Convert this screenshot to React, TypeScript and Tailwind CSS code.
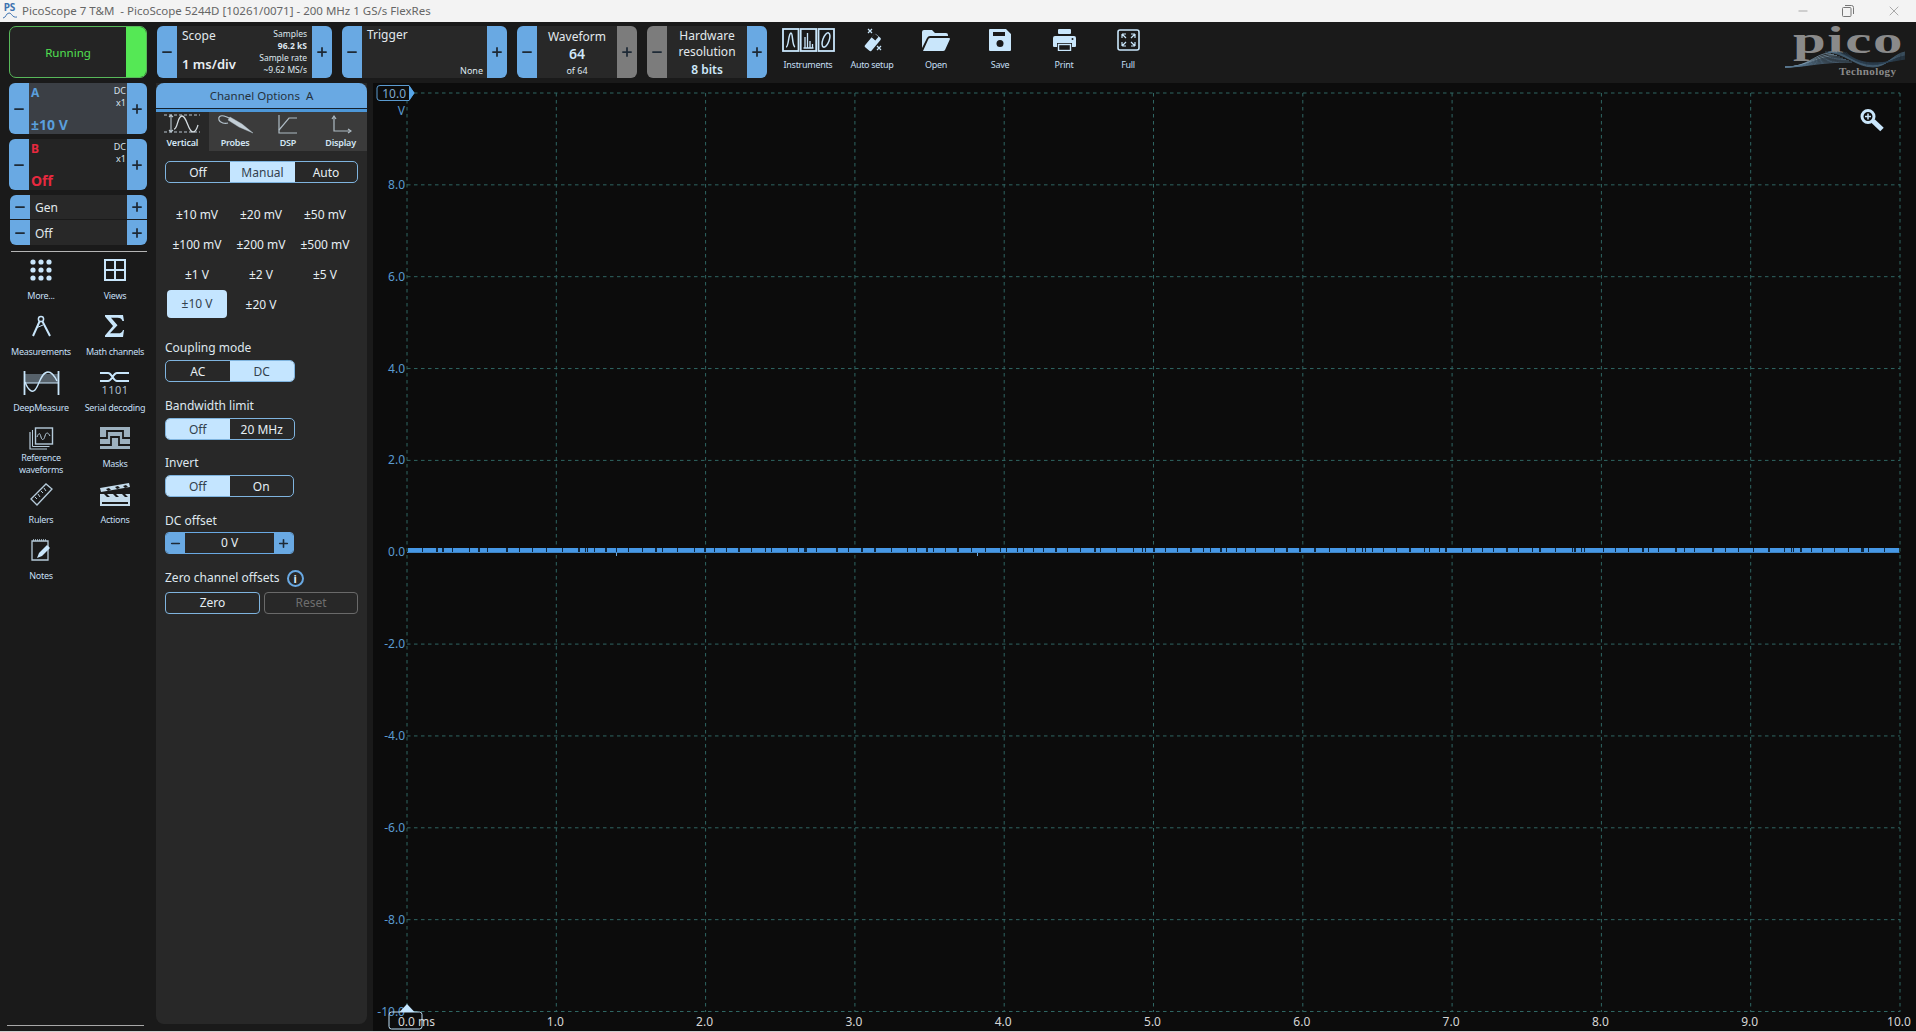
import type { ReactNode } from "react";
import { Minus, Plus, X } from "lucide-react";

const ICON = "#c9e6fb";

function Stepper({
  side,
  disabled,
  className,
}: {
  side: "l" | "r";
  disabled?: boolean;
  className: string;
}) {
  return (
    <div
      className={`flex shrink-0 items-center justify-center text-[#1e2a36] ${
        disabled ? "bg-[#7c7c7c]" : "bg-[#69a9e3]"
      } ${side === "l" ? "rounded-l-[6px]" : "rounded-r-[6px]"} ${className}`}
    >
      {side === "l" ? <Minus size={14} strokeWidth={3} /> : <Plus size={14} strokeWidth={3} />}
    </div>
  );
}

function Seg({
  items,
  active,
  widths,
  className,
}: {
  items: string[];
  active: number;
  widths: string[];
  className: string;
}) {
  return (
    <div className={`flex h-[22px] overflow-hidden rounded-[5px] border border-[#7fb4df] ${className}`}>
      {items.map((item, i) => (
        <div
          key={item}
          className={`flex items-center justify-center pt-[1px] text-[12px] ${widths[i]} ${
            i === active ? "bg-[#c4e5ff] text-[#33414d]" : "text-[#e6eef4]"
          }`}
        >
          {item}
        </div>
      ))}
    </div>
  );
}

function Channel({ name, range, colour, bg }: { name: string; range: string; colour: string; bg: string }) {
  return (
    <div className="flex h-[51px] w-[138px]">
      <Stepper side="l" className="w-[20px]" />
      <div className={`relative flex flex-1 flex-col justify-between px-[2px] ${bg}`}>
        <div className={`mt-[3px] text-[12px] font-bold leading-[14px] ${colour}`}>{name}</div>
        <div className={`mb-[1px] text-[14px] font-bold leading-[16px] ${colour}`}>{range}</div>
        <div className="absolute right-[1px] top-[2px] text-right text-[9px] leading-[12px] text-[#d8e4ee]">
          DC
          <br />
          x1
        </div>
      </div>
      <Stepper side="r" className="w-[20px]" />
    </div>
  );
}

function ToolButton({ icon, label, tight }: { icon: ReactNode; label: ReactNode; tight?: boolean }) {
  return (
    <div className="flex h-[56px] w-[74px] flex-col items-center">
      <div className={`flex items-start justify-center ${tight ? "h-[25px]" : "h-[31px]"}`}>{icon}</div>
      <div className="text-center text-[9px] leading-[12px] tracking-[-0.3px] text-[#c4dff3]">{label}</div>
    </div>
  );
}

function TopTool({ icon, label }: { icon: ReactNode; label: string }) {
  return (
    <div className="flex w-[64px] flex-col items-center">
      <div className="flex h-[28px] items-center justify-center">{icon}</div>
      <div className="mt-[5px] text-[9px] leading-[12px] tracking-[-0.3px] text-[#c4dff3]">{label}</div>
    </div>
  );
}

function Tab({ icon, label, active }: { icon: ReactNode; label: string; active?: boolean }) {
  return (
    <div className={`flex h-[39px] w-[53px] flex-col items-center ${active ? "bg-[#282828]" : "bg-[#3b3b3b]"}`}>
      <div className="flex h-[24px] items-center">{icon}</div>
      <div className="text-[9px] font-semibold leading-[13px] tracking-[-0.2px] text-[#d4e6f3]">{label}</div>
    </div>
  );
}

function Instruments() {
  return (
    <svg width="53" height="24" viewBox="0 0 53 24" fill="none" stroke={ICON} strokeWidth="1.8">
      <rect x="1" y="1" width="15.500" height="22" />
      <rect x="18.700" y="1" width="15.500" height="22" />
      <rect x="36.500" y="1" width="15.500" height="22" />
      <path d="M4 19c3 0 2-13 5-14 2 0 1 13 4 14" strokeWidth="1.500" />
      <path d="M21.500 20h10M23 20V9M25.500 20V5M28 20v-7M30.500 20v-4" strokeWidth="1.300" />
      <ellipse cx="44" cy="12" rx="3.200" ry="7.500" transform="rotate(20 44 12)" strokeWidth="1.500" />
    </svg>
  );
}

function AutoSetup() {
  return (
    <svg width="21" height="24" viewBox="0 0 21 24" fill="none">
      <rect x="6.500" y="6" width="8.500" height="17" rx="1.500" fill={ICON} transform="rotate(40 10.700 14.500)" />
      <rect x="10.500" y="6.500" width="5" height="5" fill="#1a1a1a" transform="rotate(40 13 9)" />
      <path d="M6 1l4 4M10 1L6 5M15 18l4 4M19 18l-4 4" stroke={ICON} strokeWidth="1.200" />
    </svg>
  );
}

function OpenIcon() {
  return (
    <svg width="28" height="22" viewBox="0 0 28 22" fill={ICON}>
      <path d="M0 3q0-2 2-2h8l3 3h11q2 0 2 2v1H8q-2 0-3 2L0 19z" />
      <path d="M8 9h19q1 0 1 1l-5 11q-.5 1-2 1H1l5-11q.5-2 2-2z" />
    </svg>
  );
}

function SaveIcon() {
  return (
    <svg width="22" height="22" viewBox="0 0 22 22">
      <path
        fill={ICON}
        fillRule="evenodd"
        d="M1 0h16l5 5v16a1 1 0 0 1-1 1H1a1 1 0 0 1-1-1V1a1 1 0 0 1 1-1zM4 3v4h12V3z"
      />
      <circle cx="11" cy="14.500" r="3.500" fill="#1a1a1a" />
    </svg>
  );
}

function PrintIcon() {
  return (
    <svg width="23" height="22" viewBox="0 0 23 22" fill={ICON}>
      <rect x="5" y="0" width="13" height="5" rx="1" />
      <path d="M2 7h19q2 0 2 2v8q0 1-1 1h-3v-4H4v4H1q-1 0-1-1V9q0-2 2-2z" />
      <rect x="5.500" y="15.500" width="12" height="6" fill="none" stroke={ICON} strokeWidth="1.400" />
      <circle cx="19.500" cy="10" r="1" fill="#1a1a1a" />
    </svg>
  );
}

function FullIcon() {
  return (
    <svg width="23" height="22" viewBox="0 0 23 22" fill="none" stroke={ICON}>
      <rect x="1" y="1" width="21" height="20" rx="2" strokeWidth="1.600" />
      <path d="M5 5h4M5 5v4M5 5l4 4M18 5h-4M18 5v4M18 5l-4 4M5 17h4M5 17v-4M5 17l4-4M18 17h-4M18 17v-4M18 17l-4-4" strokeWidth="1.200" />
    </svg>
  );
}

function VerticalIcon() {
  return (
    <svg width="38" height="22" viewBox="0 0 38 22" fill="none" stroke="#b9c6cf" strokeWidth="1.100">
      <path d="M1 2h36M1 19h36" strokeDasharray="3 2" />
      <path d="M8 2v17M6 4l2-2 2 2M6 17l2 2 2-2" />
      <path d="M11 16c4 0 3-13 8-13s6 16 11 16c3 0 4-4 5-7" strokeWidth="1.300" stroke="#d5dde2" />
    </svg>
  );
}

function ProbeIcon() {
  return (
    <svg width="38" height="20" viewBox="0 0 38 20" fill="none" stroke="#b6c4ce">
      <path d="M12 9C9 10 4 9 3 6s1-5 5-4 5 2 7 3" strokeWidth="1.200" />
      <path d="M14 3l12 7 11 9-14-6-11-7z" fill="#c3ced6" strokeWidth="0.400" />
    </svg>
  );
}

function DspIcon() {
  return (
    <svg width="22" height="20" viewBox="0 0 22 20" fill="none" stroke="#aebbc4" strokeWidth="1.200">
      <path d="M2 1v18h18" />
      <path d="M2 16L12 4h8" />
    </svg>
  );
}

function DisplayIcon() {
  return (
    <svg width="22" height="20" viewBox="0 0 22 20" fill="none" stroke="#aebbc4" strokeWidth="1.200">
      <path d="M4 3v14h16" />
      <path d="M2 5l2-3 2 3M18 15l3 2-3 2" />
    </svg>
  );
}

function Dots() {
  return (
    <svg width="22" height="22" viewBox="0 0 22 22" fill={ICON}>
      {[3, 11, 19].map((y) =>
        [3, 11, 19].map((x) => <circle key={`${x}-${y}`} cx={x} cy={y} r="2.600" />),
      )}
    </svg>
  );
}

function Views() {
  return (
    <svg width="22" height="22" viewBox="0 0 22 22" fill="none" stroke={ICON} strokeWidth="2">
      <rect x="1" y="1" width="20" height="20" />
      <path d="M11 1v20M1 11h20" />
    </svg>
  );
}

function MeasureIcon() {
  return (
    <svg width="19" height="22" viewBox="0 0 19 22" fill="none" stroke={ICON} strokeWidth="2">
      <circle cx="9" cy="4" r="2.600" strokeWidth="1.500" />
      <path d="M7.500 6.500L1 21M10.500 6.500L18 21" />
      <path d="M4 13l7-3" strokeWidth="1" />
    </svg>
  );
}

function Sigma() {
  return (
    <svg width="20" height="22" viewBox="0 0 20 22" fill={ICON}>
      <path d="M0 0h18l1 6h-1.500c-1-2.500-2-3.200-5-3.200H6l6.500 7.500-7.500 8h8c3 0 4.200-.8 5-3.300H19L18 22H0v-1.500L8 11 0 1.500z" />
    </svg>
  );
}

function DeepIcon() {
  return (
    <svg width="37" height="24" viewBox="0 0 37 24" fill="none" stroke={ICON} strokeWidth="1.400">
      <path d="M2 3h33v9H2z" fill="#6b7a85" stroke="none" opacity="0.75" />
      <path d="M1.500 0v24M35.500 0v24" strokeWidth="1.800" />
      <path d="M2 11c3 8 7 11 10 8 4-4 6-18 13-18 4 0 7 5 9 9" />
      <path d="M2 12h33" strokeWidth="1" />
    </svg>
  );
}

function SerialIcon() {
  return (
    <svg width="30" height="14" viewBox="0 0 30 14" fill="none" stroke={ICON} strokeWidth="2">
      <path d="M0 2h8c4 0 5 8 9 8h12M0 10h8c4 0 5-8 9-8h12" />
    </svg>
  );
}

function RefIcon() {
  return (
    <svg width="25" height="23" viewBox="0 0 25 23" fill="none" stroke="#b6cbda">
      <path d="M1 5v17h17" strokeWidth="1.200" />
      <path d="M3.500 3v16.500h17" strokeWidth="1" />
      <rect x="6.500" y="1" width="17" height="16" strokeWidth="1.400" />
      <path d="M8 10c2-5 3-4 4 0s3 3 4-1 3-4 5 0" strokeWidth="1" />
    </svg>
  );
}

function MaskIcon() {
  return (
    <svg width="30" height="22" viewBox="0 0 30 22" fill="none">
      <rect width="30" height="22" fill="#9db1bf" />
      <path d="M0 11h7V4h16v7h7M0 18h11v-8h8v8h11" stroke="#1a1a1a" strokeWidth="1.800" />
    </svg>
  );
}

function RulerIcon() {
  return (
    <svg width="23" height="23" viewBox="0 0 23 23" fill="none" stroke="#b6cbda" strokeWidth="1.300">
      <path d="M1 16L16 1l6 5L7 22z" />
      <path d="M5 14l2 2M8 11l2 3M11 8l2 2M14 5l2 3" strokeWidth="1" />
    </svg>
  );
}

function ClapIcon() {
  return (
    <svg width="30" height="23" viewBox="0 0 30 23" fill="#c4dbeb">
      <path d="M0 5L29 0l1 4L1 9z" />
      <path d="M0 11h30v12H0zM2 19v2h26v-2z" />
      <path d="M4 11l3 3h3l-3-3zM13 11l3 3h3l-3-3zM22 11l3 3h3l-3-3z" fill="#1a1a1a" />
      <path d="M6 6l3-1 2 2-3 1zM15 4l3-1 2 2-3 1zM23 3l3-1 2 2-3 1z" fill="#1a1a1a" />
    </svg>
  );
}

function NotesIcon() {
  return (
    <svg width="20" height="22" viewBox="0 0 20 22" fill="none" stroke="#b6cbda" strokeWidth="1.300">
      <path d="M1 2h16v19H1z" />
      <path d="M2 1h14" strokeDasharray="1 1" />
      <path d="M6 19l2-5 8-8 3 3-8 8z" fill={ICON} stroke="none" />
    </svg>
  );
}

function PicoLogo() {
  return (
    <div className="relative h-[56px] w-[120px]">
      <div
        className="absolute left-[8px] top-[-5px] origin-left scale-x-[1.550] text-[38px] font-bold leading-[38px] tracking-[1px] text-[#8a8a8a]"
        style={{ fontFamily: '"Liberation Serif", serif' }}
      >
        pico
      </div>
      <svg className="absolute left-0 top-[25px]" width="120" height="18" viewBox="0 0 120 18" fill="none">
        {[0, 1, 2, 3, 4, 5, 6, 7].map((d) => (
          <g key={d}>
            <path
              d={`M0 16C24 16 30 ${2 + d * 1.3} ${46 + d * 3} ${2 + d * 1.3}`}
              stroke={d < 3 ? "#88a7bf" : "#56748c"}
              strokeWidth="0.700"
            />
            <path
              d={`M${40 + d * 3} 1C60 1 70 ${16 - d * 0.6} 88 ${16 - d * 0.6}C102 ${16 - d * 0.6} 108 ${3 + d} 120 ${1 + d}`}
              stroke={d < 4 ? "#4a6880" : "#2d4254"}
              strokeWidth="0.700"
            />
          </g>
        ))}
      </svg>
      <div
        className="absolute left-[54px] top-[38px] text-[11px] font-bold leading-[14px] tracking-[0.4px] text-[#8a8a8a]"
        style={{ fontFamily: '"Liberation Serif", serif' }}
      >
        Technology
      </div>
    </div>
  );
}

// pseudo random gaps along the zero trace, fixed so every render is the same
const traceGaps = Array.from({ length: 230 }, (_, i) => ({
  x: Math.round(409 + i * 6.45 + ((i * i * 13) % 17) * 0.5),
  w: (i * 7) % 5 === 0 ? 2 : 1,
  skip: (i * i * 7 + i * 3) % 11 < 3,
})).filter((gap) => !gap.skip);

function Plot() {
  const xs = Array.from({ length: 11 }, (_, i) => 407 + i * 149.3);
  const ys = Array.from({ length: 11 }, (_, i) => 93 + i * 91.85);
  const yLabels = ["", "8.0", "6.0", "4.0", "2.0", "0.0", "-2.0", "-4.0", "-6.0", "-8.0", "-10.0"];
  return (
    <div className="h-[948px] flex-1 bg-[#0c0c0c]">
      <svg width="1543" height="948" viewBox="373 83 1543 948" style={{ fontFamily: '"Noto Sans", sans-serif' }}>
        {xs.map((x) => (
          <line key={x} x1={x} x2={x} y1={93} y2={1012} stroke="#2f6663" strokeDasharray="3.500 3.500" />
        ))}
        {ys.map((y) => (
          <line key={y} x1={407} x2={1900} y1={y} y2={y} stroke="#2f6663" strokeDasharray="3.500 3.500" />
        ))}
        {yLabels.map((label, i) => (
          <text key={i} x={405} y={ys[i] + 4} textAnchor="end" fontSize="12" fill="#5b9bd0">
            {label}
          </text>
        ))}
        <text x={405} y={115} textAnchor="end" fontSize="12" fill="#5b9bd0">
          V
        </text>
        {xs.slice(1).map((x, i) => (
          <text key={x} x={x - 1} y={1026} textAnchor="middle" fontSize="12" fill="#d6d6d6">
            {(i + 1).toFixed(1)}
          </text>
        ))}
        <text x={398} y={1026} fontSize="12" fill="#d6d6d6">
          0.0 ms
        </text>

        <rect x={408} y={548} width={1491} height={5} fill="#4698e6" />
        {traceGaps.map((gap, i) => (
          <rect key={i} x={gap.x} y={548} width={gap.w} height={4} fill="#0f2942" />
        ))}
        <line x1={407} x2={1899} y1={552.500} y2={552.500} stroke="#3f84c4" />
        <line x1={616.500} x2={616.500} y1={553} y2={556} stroke="#6ba8dd" />
        <line x1={977.500} x2={977.500} y1={553} y2={556} stroke="#6ba8dd" />

        <path d="M377 88q0-2.500 3-2.500h29l5 7.500-5 7.500h-29q-3 0-3-2.500z" fill="#0c0c0c" stroke="#5b9bd0" />
        <path d="M409 85.500l5.500 7.500-5.500 7.500z" fill="#57a6ea" />
        <text x={406} y={97.500} textAnchor="end" fontSize="12" fill="#7fa9cc">
          10.0
        </text>

        <rect x={389} y={1012} width={33} height={17} rx={2.500} fill="none" stroke="#bfe0f8" />
        <path d="M407 1004l7.500 8h-15z" fill="#c6e6ff" />

        <path d="M1873 121l9 8.500" stroke={ICON} strokeWidth="5" />
        <circle cx={1868} cy={116.500} r={6} fill="#0c0c0c" stroke={ICON} strokeWidth="3" />
        <path d="M1865 116.500h6M1868 113.500v6" stroke={ICON} strokeWidth="1.500" />
      </svg>
    </div>
  );
}

export default function App() {
  return (
    <div
      className="flex h-[1032px] w-[1916px] flex-col overflow-hidden bg-[#1a1a1a]"
      style={{ fontFamily: '"Noto Sans", sans-serif' }}
    >
      {/* window title */}
      <div className="flex h-[22px] shrink-0 items-center bg-[#f3f3f3] text-[#666]">
        <div className="ml-[2px] flex h-[16px] w-[15px] flex-col items-center text-[10px] font-bold leading-[9px] text-[#3d72b0]">
          PS
          <svg width="14" height="7" viewBox="0 0 14 7" fill="none" stroke="#3d72b0">
            <path d="M0 6c3 0 3-5 6-5s3 5 8 4" />
          </svg>
        </div>
        <div className="ml-[5px] whitespace-pre text-[11.500px]">
          PicoScope 7 T&amp;M  - PicoScope 5244D [10261/0071] - 200 MHz 1 GS/s FlexRes
        </div>
        <div className="ml-auto flex items-center text-[#777]">
          <Minus size={14} strokeWidth={1} className="mr-[32px]" />
          <svg width="12" height="12" viewBox="0 0 12 12" fill="none" stroke="currentColor" className="mr-[32px]">
            <rect x="0.500" y="2.500" width="8.500" height="9" rx="1" />
            <path d="M3 .5h6.500q2 0 2 2V9" />
          </svg>
          <X size={16} strokeWidth={0.9} className="mr-[14px]" />
        </div>
      </div>

      {/* top toolbar */}
      <div className="flex h-[61px] shrink-0 items-start bg-[#1a1a1a] pt-[4px]">
        <div className="ml-[9px] flex h-[52px] w-[138px] overflow-hidden rounded-[7px] border border-[#58b85a] bg-[#242424]">
          <div className="flex flex-1 items-center justify-center pt-[1px] text-[11.500px] text-[#52e052]">Running</div>
          <div className="w-[20px] bg-[#55e855]" />
        </div>

        <div className="ml-[10px] flex h-[52px] w-[175px]">
          <Stepper side="l" className="w-[20px]" />
          <div className="flex flex-1 justify-between bg-[#282828] px-[5px]">
            <div className="flex flex-col justify-between pb-[5px] pt-[1px]">
              <div className="text-[12px] leading-[18px] text-[#e2e8ed]">Scope</div>
              <div className="text-[13px] font-semibold leading-[18px] text-[#e8eef3]">1 ms/div</div>
            </div>
            <div className="flex flex-col items-end pt-[2px] text-[8.500px] leading-[12px] text-[#dfe7ee]">
              <div>Samples</div>
              <div className="font-bold">96.2 kS</div>
              <div>Sample rate</div>
              <div>~9.62 MS/s</div>
            </div>
          </div>
          <Stepper side="r" className="w-[20px]" />
        </div>

        <div className="ml-[10px] flex h-[52px] w-[165px]">
          <Stepper side="l" className="w-[20px]" />
          <div className="relative flex-1 bg-[#282828] px-[5px] text-[12px] leading-[18px] text-[#e2e8ed]">
            Trigger
            <div className="absolute bottom-[1px] right-[4px] text-[9px] leading-[12px] text-[#dfe7ee]">None</div>
          </div>
          <Stepper side="r" className="w-[20px]" />
        </div>

        <div className="ml-[10px] flex h-[52px] w-[120px]">
          <Stepper side="l" className="w-[20px]" />
          <div className="flex flex-1 flex-col items-center bg-[#282828] pt-[2px]">
            <div className="text-[12px] leading-[17px] text-[#e2e8ed]">Waveform</div>
            <div className="text-[14px] font-semibold leading-[18px] text-[#cfe8fb]">64</div>
            <div className="mt-[2px] text-[9px] leading-[12px] text-[#dfe7ee]">of 64</div>
          </div>
          <Stepper side="r" disabled className="w-[20px]" />
        </div>

        <div className="ml-[10px] flex h-[52px] w-[120px]">
          <Stepper side="l" disabled className="w-[20px]" />
          <div className="flex flex-1 flex-col items-center bg-[#282828] pt-[2px] text-center">
            <div className="text-[12px] leading-[16px] text-[#e2e8ed]">Hardware</div>
            <div className="text-[12px] leading-[16px] text-[#e2e8ed]">resolution</div>
            <div className="mt-[1px] text-[12px] font-semibold leading-[18px] text-[#cfe8fb]">8 bits</div>
          </div>
          <Stepper side="r" className="w-[20px]" />
        </div>

        <div className="ml-[9px] flex">
          <TopTool icon={<Instruments />} label="Instruments" />
          <TopTool icon={<AutoSetup />} label="Auto setup" />
          <TopTool icon={<OpenIcon />} label="Open" />
          <TopTool icon={<SaveIcon />} label="Save" />
          <TopTool icon={<PrintIcon />} label="Print" />
          <TopTool icon={<FullIcon />} label="Full" />
        </div>

        <div className="ml-auto mr-[11px]">
          <PicoLogo />
        </div>
      </div>

      <div className="flex min-h-0 flex-1">
        {/* left column */}
        <div className="flex w-[156px] shrink-0 flex-col pl-[9px]">
          <div className="flex flex-col gap-[5px]">
            <Channel name="A" range="±10 V" colour="text-[#5a9fdc]" bg="bg-[#3b3f45]" />
            <Channel name="B" range="Off" colour="text-[#e8293f]" bg="bg-[#242424]" />
            <div className="mr-[9px] flex h-[51px] w-[137px] flex-col self-end">
              {["Gen", "Off"].map((label, i) => (
                <div key={label} className="flex h-[25px] border-b border-[#1a1a1a] last:border-b-0">
                  <div className={`flex w-[20px] items-center justify-center bg-[#69a9e3] text-[#1e2a36] ${i === 0 ? "rounded-tl-[6px]" : "rounded-bl-[6px]"}`}>
                    <Minus size={14} strokeWidth={3} />
                  </div>
                  <div className="flex flex-1 items-center bg-[#282828] px-[5px] pt-[2px] text-[12px] text-[#e2e8ed]">{label}</div>
                  <div className={`flex w-[20px] items-center justify-center bg-[#69a9e3] text-[#1e2a36] ${i === 0 ? "rounded-tr-[6px]" : "rounded-br-[6px]"}`}>
                    <Plus size={14} strokeWidth={3} />
                  </div>
                </div>
              ))}
            </div>
          </div>
          <div className="ml-[2px] mt-[5px] h-px w-[136px] bg-[#b5b5b5]" />
          <div className="mt-[7px] -ml-[5px] grid grid-cols-[74px_74px] auto-rows-[56px]">
            <ToolButton icon={<Dots />} label="More..." />
            <ToolButton icon={<Views />} label="Views" />
            <ToolButton icon={<MeasureIcon />} label="Measurements" />
            <ToolButton icon={<Sigma />} label="Math channels" />
            <ToolButton icon={<DeepIcon />} label="DeepMeasure" />
            <ToolButton
              icon={
                <div className="flex flex-col items-center">
                  <SerialIcon />
                  <div className="-mt-[1px] text-[11px] leading-[11px] tracking-[0.5px] text-[#a9bccb]">1101</div>
                </div>
              }
              label="Serial decoding"
            />
            <ToolButton tight icon={<RefIcon />} label={<>Reference<br />waveforms</>} />
            <ToolButton icon={<MaskIcon />} label="Masks" />
            <ToolButton icon={<RulerIcon />} label="Rulers" />
            <ToolButton icon={<ClapIcon />} label="Actions" />
            <ToolButton icon={<NotesIcon />} label="Notes" />
          </div>
          <div className="mt-auto mb-[5px] -ml-[2px] h-px w-[137px] bg-[#a8a8a8]" />
        </div>

        {/* channel options */}
        <div className="mb-[7px] flex w-[211px] shrink-0 flex-col rounded-b-[8px] bg-[#282828]">
          <div className="flex h-[25px] items-center justify-center rounded-t-[8px] bg-[#69a9e3] text-[11.500px] text-[#25323d]">
            Channel Options&nbsp; A
          </div>
          <div className="h-px bg-[#14202b]" />
          <div className="h-[3px] bg-[#4d97d8]" />
          <div className="flex">
            <Tab active icon={<VerticalIcon />} label="Vertical" />
            <Tab icon={<ProbeIcon />} label="Probes" />
            <Tab icon={<DspIcon />} label="DSP" />
            <Tab icon={<DisplayIcon />} label="Display" />
          </div>
          <Seg
            className="ml-[9px] mt-[10px] w-[193px]"
            items={["Off", "Manual", "Auto"]}
            active={1}
            widths={["w-[64px]", "w-[65px]", "w-[62px]"]}
          />
          <div className="ml-[9px] mt-[17px] grid w-[192px] grid-cols-3 auto-rows-[30px] text-[12px] text-[#e6eef4]">
            {["±10 mV", "±20 mV", "±50 mV", "±100 mV", "±200 mV", "±500 mV", "±1 V", "±2 V", "±5 V", "±10 V", "±20 V"].map((v) => (
              <div
                key={v}
                className={`flex items-center justify-center rounded-[4px] ${
                  v === "±10 V" ? "mx-[2px] h-[28px] bg-[#c4e5ff] text-[#33414d]" : ""
                }`}
              >
                {v}
              </div>
            ))}
          </div>

          <div className="ml-[9px] mt-[19px] text-[12px] leading-[18px] text-[#dfe7ee]">Coupling mode</div>
          <Seg className="ml-[9px] mt-[3px] w-[130px]" items={["AC", "DC"]} active={1} widths={["w-[64px]", "w-[65px]"]} />
          <div className="ml-[9px] mt-[15px] text-[12px] leading-[18px] text-[#dfe7ee]">Bandwidth limit</div>
          <Seg className="ml-[9px] mt-[3px] w-[130px]" items={["Off", "20 MHz"]} active={0} widths={["w-[64px]", "w-[65px]"]} />
          <div className="ml-[9px] mt-[14px] text-[12px] leading-[18px] text-[#dfe7ee]">Invert</div>
          <Seg className="ml-[9px] mt-[3px] w-[129px]" items={["Off", "On"]} active={0} widths={["w-[64px]", "w-[64px]"]} />
          <div className="ml-[9px] mt-[15px] text-[12px] leading-[18px] text-[#dfe7ee]">DC offset</div>
          <div className="ml-[9px] mt-[2px] flex h-[22px] w-[129px] overflow-hidden rounded-[4px] border border-[#69a9e3]">
            <div className="flex w-[19px] items-center justify-center bg-[#69a9e3] text-[#1e2a36]">
              <Minus size={13} strokeWidth={3} />
            </div>
            <div className="flex flex-1 items-center justify-center text-[12px] text-[#e6eef4]">0 V</div>
            <div className="flex w-[19px] items-center justify-center bg-[#69a9e3] text-[#1e2a36]">
              <Plus size={13} strokeWidth={3} />
            </div>
          </div>
          <div className="ml-[9px] mt-[15px] flex h-[18px] items-center text-[12px] text-[#dfe7ee]">
            Zero channel offsets
            <span className="ml-[7px] flex size-[17px] items-center justify-center rounded-full border-2 border-[#69a9e3] text-[11px] font-bold leading-none text-[#dfeefa]">
              i
            </span>
          </div>
          <div className="ml-[9px] mt-[5px] flex gap-[4px]">
            <div className="flex h-[22px] w-[95px] items-center justify-center rounded-[4px] border border-[#7fb4df] text-[12px] text-[#e6eef4]">
              Zero
            </div>
            <div className="flex h-[22px] w-[94px] items-center justify-center rounded-[4px] border border-[#6a6a6a] text-[12px] text-[#6e6e6e]">
              Reset
            </div>
          </div>
        </div>

        <div className="w-[6px] shrink-0 bg-[#1a1a1a]" />
        <Plot />
      </div>
      <div className="h-px shrink-0 bg-[#cfcfcf]" />
    </div>
  );
}
